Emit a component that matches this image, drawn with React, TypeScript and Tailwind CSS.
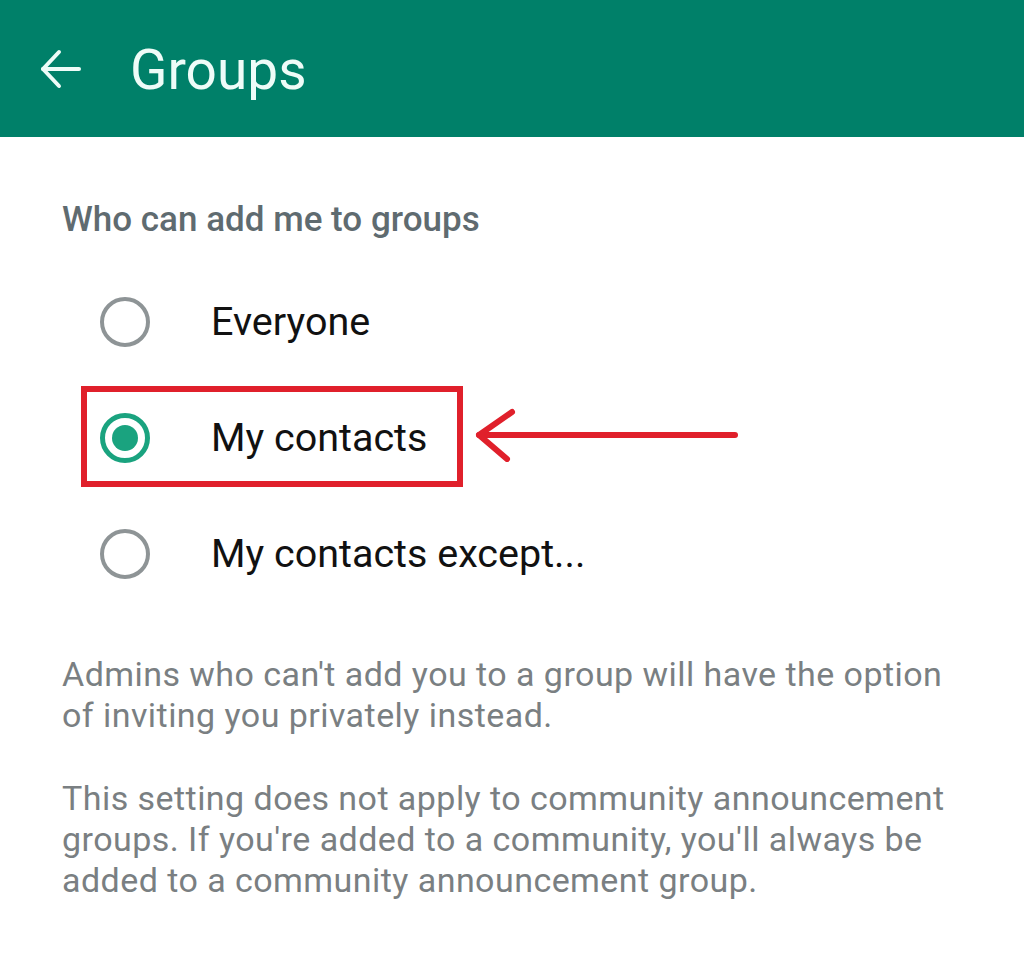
import React from "react";

function Radio({ checked }: { checked?: boolean }) {
  return checked ? (
    <div className="w-[50px] h-[50px] rounded-full border-[5px] border-[#1aa37f] flex items-center justify-center">
      <div className="w-[26px] h-[26px] rounded-full bg-[#1aa37f]" />
    </div>
  ) : (
    <div className="w-[50px] h-[50px] rounded-full border-[4px] border-[#8e9496]" />
  );
}

function Row({ label, checked, annotated }: { label: string; checked?: boolean; annotated?: boolean }) {
  return (
    <div className="relative h-[116px] flex items-center pl-[38px]">
      <Radio checked={checked} />
      <span className="ml-[61px] text-[39.5px] text-[#111] leading-none">{label}</span>
      {annotated && (
        <>
          <div className="absolute left-[19px] top-[6px] w-[382px] h-[101px] border-[6px] border-[#e0202b]" />
          <svg className="absolute left-[410px] top-[12px]" width="270" height="70" viewBox="0 0 270 70">
            <g stroke="#e0202b" strokeWidth="6" strokeLinecap="round" strokeLinejoin="round" fill="none">
              <path d="M7 43 L263 43" />
              <path d="M40 20 L7 43 L35 67" />
            </g>
          </svg>
        </>
      )}
    </div>
  );
}

export default function App() {
  return (
    <div className="w-[1024px] h-[954px] bg-white font-['Roboto',sans-serif]">
      <div className="h-[137px] bg-[#008069] flex items-center pl-[40px]">
        <svg width="42" height="42" viewBox="0 0 42 42" className="mt-[0px]">
          <g stroke="#eefcf8" strokeWidth="4" strokeLinecap="round" strokeLinejoin="round" fill="none">
            <path d="M3 21 L39 21" />
            <path d="M19 4 L3 21 L19 38" />
          </g>
        </svg>
        <span className="ml-[48px] text-[55px] text-[#eefcf8] leading-none mt-[4px]">Groups</span>
      </div>
      <div className="pl-[62px] pr-[52px]">
        <div className="pt-[61px] text-[35px] font-medium text-[#5f6b70] leading-[44px]">Who can add me to groups</div>
        <div className="mt-[22px]">
          <Row label="Everyone" />
          <Row label="My contacts" checked annotated />
          <Row label="My contacts except..." />
        </div>
        <p className="mt-[42px] text-[34px] tracking-[0.45px] leading-[41px] text-[#7a7f82]">
          Admins who can't add you to a group will have the option of inviting you privately instead.
        </p>
        <p className="mt-[42px] text-[34px] tracking-[0.45px] leading-[41px] text-[#7a7f82]">
          This setting does not apply to community announcement groups. If you're added to a community, you'll always be added to a community announcement group.
        </p>
      </div>
    </div>
  );
}
